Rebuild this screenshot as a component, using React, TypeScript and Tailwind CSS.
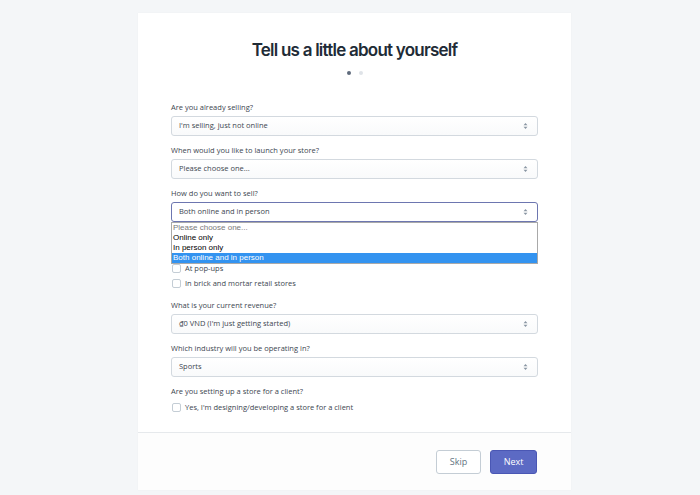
import React from 'react';

const font = { fontFamily: '"Open Sans", "Liberation Sans", Arial, sans-serif' };

function Arrows() {
  return (
    <svg width="5" height="8" viewBox="0 0 5 8" className="shrink-0">
      <path d="M2.5 1 L4.5 3.2 H0.5 Z" fill="#8a96a3" />
      <path d="M2.5 7 L4.5 4.8 H0.5 Z" fill="#8a96a3" />
    </svg>
  );
}

function Field({ label, value, focused }: { label: string; value: string; focused?: boolean }) {
  return (
    <div className="flex flex-col">
      <div className="h-[14px] leading-[14px] text-[7.5px] text-[#3c4650]">{label}</div>
      <div
        className={
          focused
            ? 'mt-[2px] h-[20px] flex items-center justify-between pl-[7px] pr-[9px] rounded-[3px] border border-[#6d76b0] bg-white'
            : 'mt-[2px] h-[20px] flex items-center justify-between pl-[7px] pr-[9px] rounded-[3px] border border-[#d3d9df] bg-gradient-to-b from-white to-[#f9fafb]'
        }
      >
        <span className="text-[7.5px] text-[#3c4650]">{value}</span>
        <Arrows />
      </div>
    </div>
  );
}

function Check({ label }: { label: string }) {
  return (
    <div className="h-[15px] flex items-center gap-[4px] pl-[1px]">
      <span className="w-[9px] h-[9px] rounded-[2px] border border-[#c4cdd5] bg-white" />
      <span className="text-[7.5px] text-[#3c4650]">{label}</span>
    </div>
  );
}

export default function App() {
  return (
    <div className="w-[700px] h-[495px] bg-[#f4f6f8] overflow-hidden pt-[13px]" style={font}>
      <div className="ml-[138px] w-[433px] h-[477px] bg-white shadow-[0_0_1px_rgba(0,0,0,0.06)] flex flex-col">
        <div className="relative px-[33px] pt-[25px] flex-1">
          <h1
            className="text-center text-[17px] leading-[24px] font-semibold tracking-[-0.045em] text-[#212b36]"
            style={{ fontFamily: 'Inter, "Noto Sans", sans-serif' }}
          >
            Tell us a little about yourself
          </h1>
          <div className="mt-[9px] flex justify-center gap-[8px]">
            <span className="w-[4px] h-[4px] rounded-full bg-[#5f6b7c]" />
            <span className="w-[4px] h-[4px] rounded-full bg-[#dfe3e8]" />
          </div>

          <div className="mt-[25px] flex flex-col gap-[7px]">
            <Field label="Are you already selling?" value="I'm selling, just not online" />
            <Field label="When would you like to launch your store?" value="Please choose one..." />
            <div className="relative">
              <Field label="How do you want to sell?" value="Both online and in person" focused />
              <div
                className="absolute left-0 right-0 top-[36px] z-10 bg-white border border-[#a9a9a9] flex flex-col text-[8px] leading-[10px] text-black"
                style={{ fontFamily: '"Liberation Sans", Arial, sans-serif' }}
              >
                <div className="pl-[1px] text-[#7a7a7a]">Please choose one...</div>
                <div className="pl-[1px]">Online only</div>
                <div className="pl-[1px]">In person only</div>
                <div className="pl-[1px] bg-[#3393f0] text-white">Both online and in person</div>
              </div>
            </div>
            <div className="flex flex-col">
              {/* covered by the open dropdown */}
              <div className="h-[32px]" />
              <Check label="At pop-ups" />
              <Check label="In brick and mortar retail stores" />
            </div>
            <Field label="What is your current revenue?" value="₫0 VND (I'm just getting started)" />
            <Field label="Which industry will you be operating in?" value="Sports" />
            <div className="flex flex-col">
              <div className="h-[14px] leading-[14px] text-[7.5px] text-[#3c4650]">Are you setting up a store for a client?</div>
              <div className="mt-[2px]">
                <Check label="Yes, I'm designing/developing a store for a client" />
              </div>
            </div>
          </div>
        </div>

        <div className="h-[58px] border-t border-[#e6e9ec] bg-[#fdfdfd] flex items-center justify-end gap-[9px] px-[34px]">
          <button className="w-[45px] h-[24px] rounded-[3px] border border-[#c4cdd5] bg-white text-[9px] text-[#637381]">
            Skip
          </button>
          <button className="w-[47px] h-[24px] rounded-[3px] border border-[#4a57b4] bg-[#5c6ac4] text-[9px] text-white">
            Next
          </button>
        </div>
      </div>
    </div>
  );
}
